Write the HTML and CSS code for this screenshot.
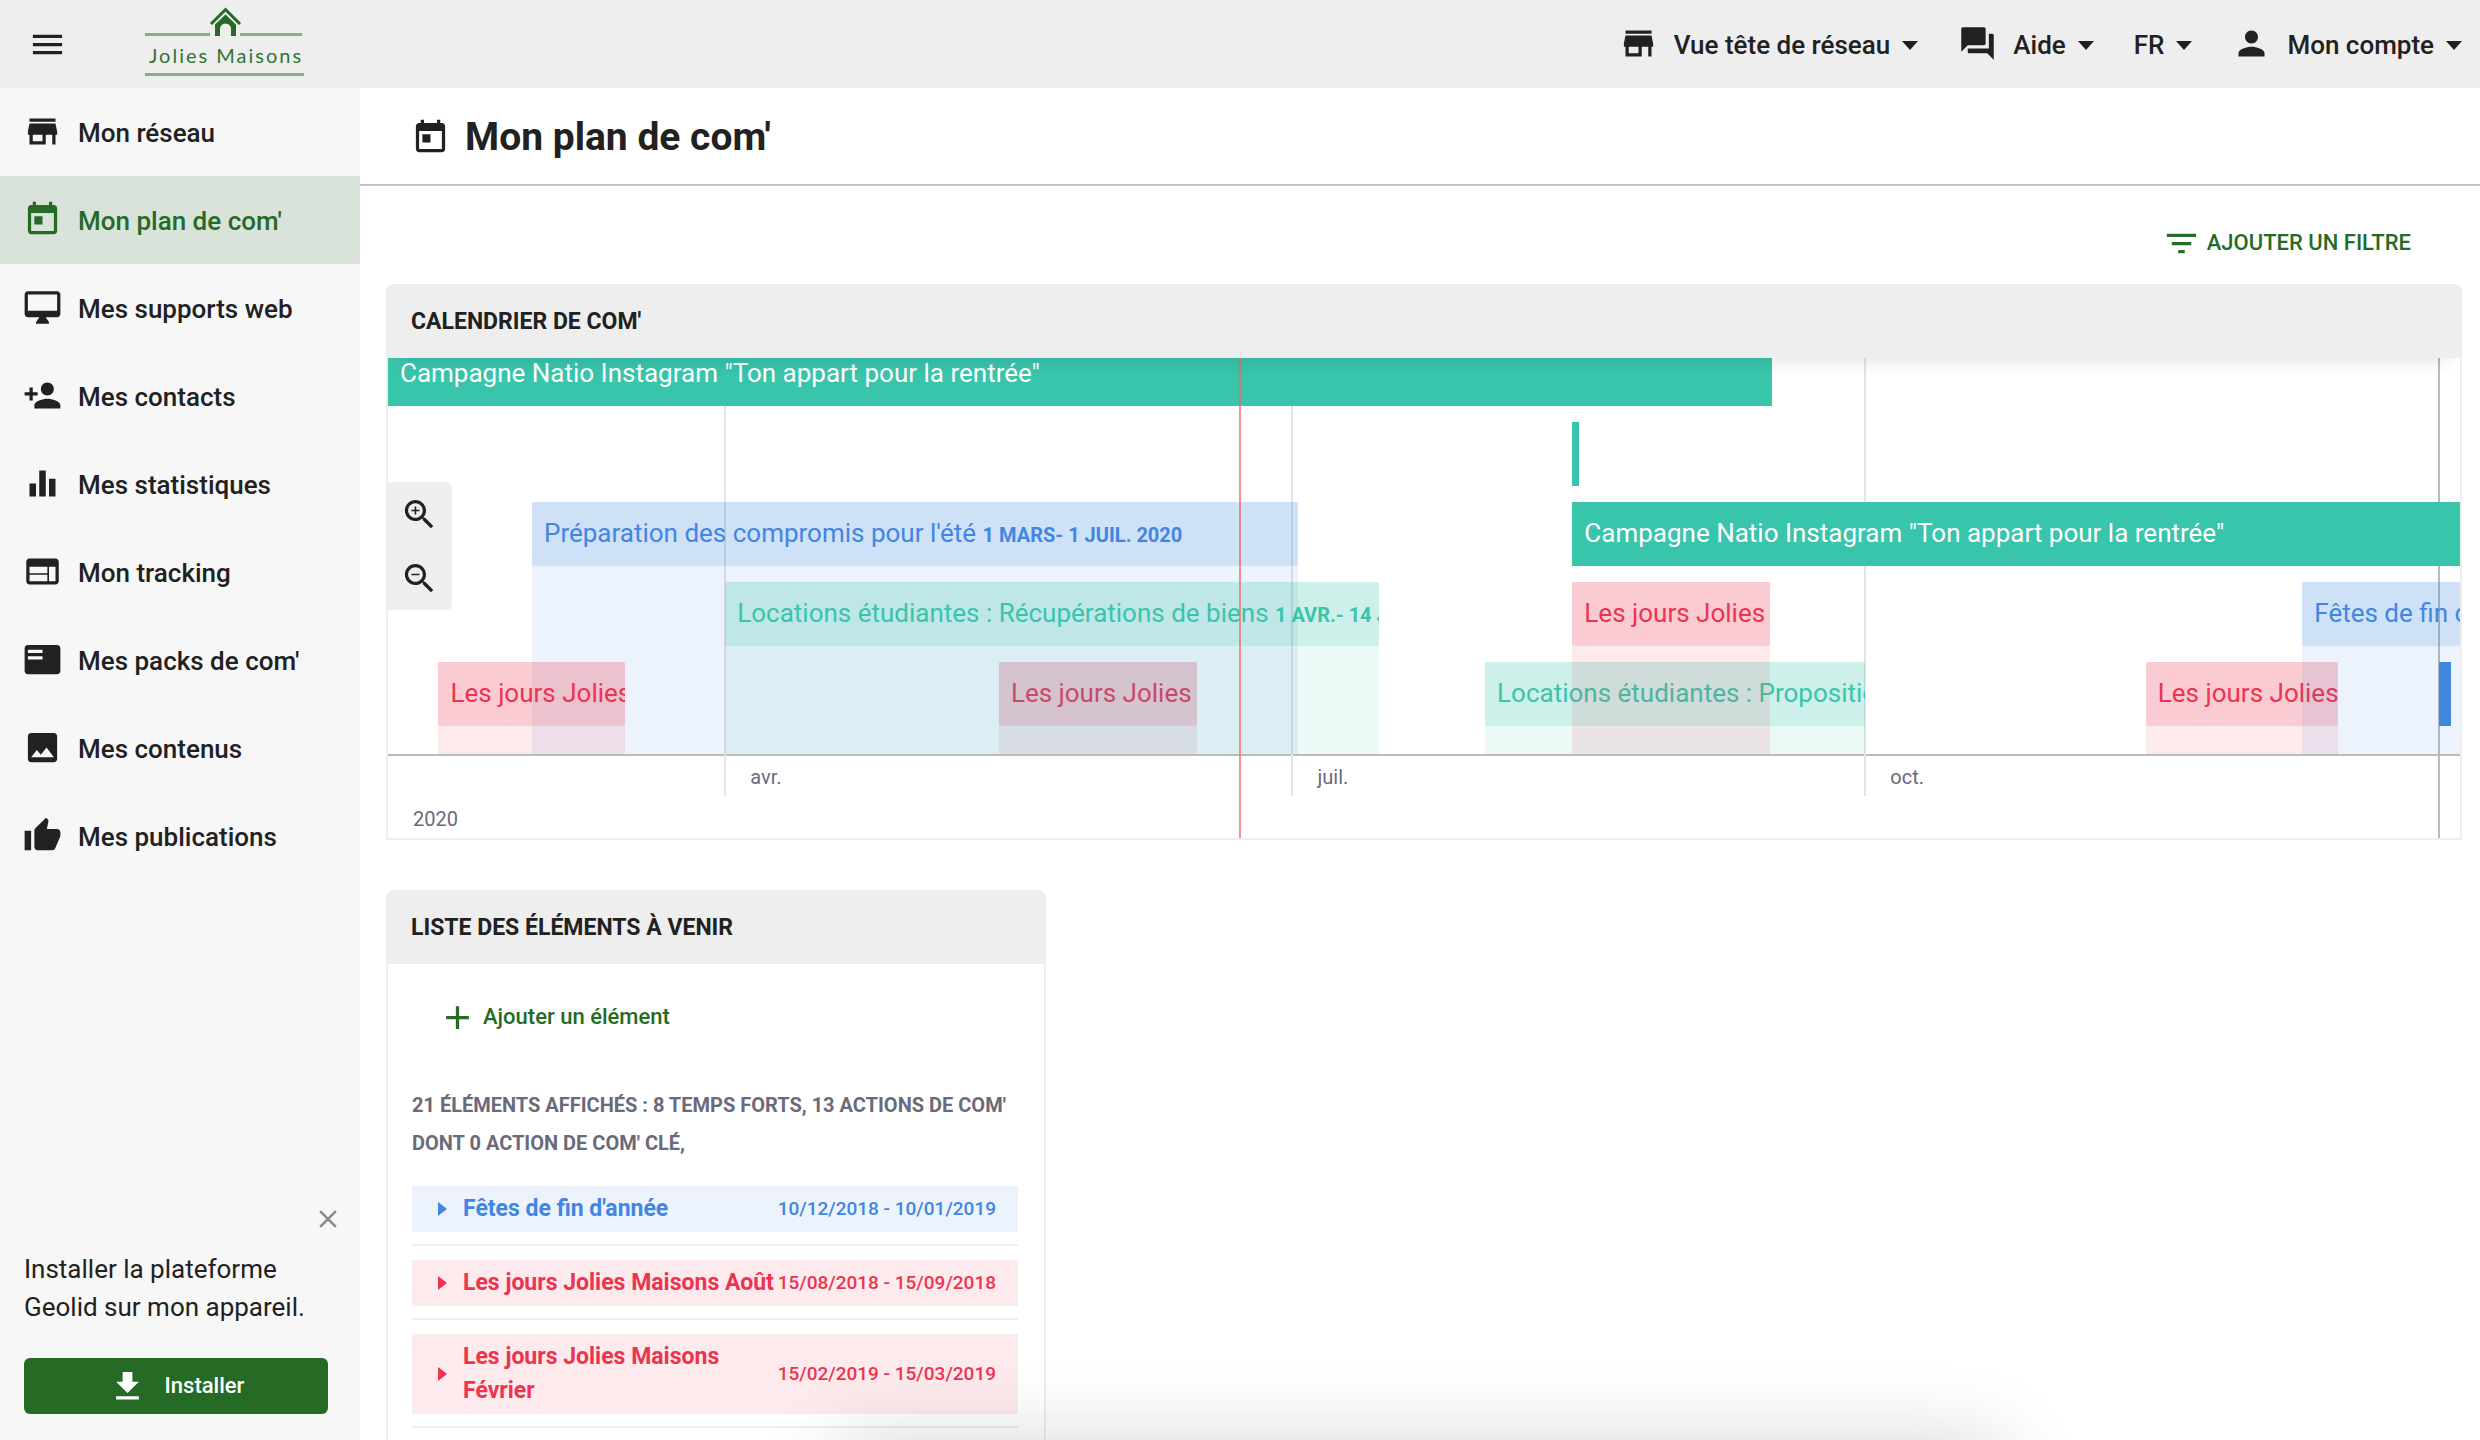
FILE: index.html
```html
<!DOCTYPE html>
<html lang="fr">
<head>
<meta charset="utf-8">
<meta name="viewport" content="width=device-width, initial-scale=1">
<title>Mon plan de com' – Jolies Maisons</title>
<link rel="stylesheet" href="styles.css">
</head>
<body>
<svg class="sprite" aria-hidden="true">
  <symbol id="i-menu" viewBox="0 0 24 24"><path d="M3 18h18v-2H3v2zm0-5h18v-2H3v2zm0-7v2h18V6H3z"/></symbol>
  <symbol id="i-store" viewBox="0 0 24 24"><path d="M20 4H4v2h16V4zm1 10v-2l-1-5H4l-1 5v2h1v6h10v-6h4v6h2v-6h1zm-9 4H6v-4h6v4z"/></symbol>
  <symbol id="i-today" viewBox="0 0 24 24"><path d="M19 3h-1V1h-2v2H8V1H6v2H5c-1.11 0-1.99.9-1.99 2L3 19c0 1.1.89 2 2 2h14c1.1 0 2-.9 2-2V5c0-1.1-.9-2-2-2zm0 16H5V8h14v11zM7 10h5v5H7z"/></symbol>
  <symbol id="i-screen" viewBox="0 0 24 24"><path d="M21 2H3c-1.1 0-2 .9-2 2v12c0 1.1.9 2 2 2h7l-2 3v1h8v-1l-2-3h7c1.1 0 2-.9 2-2V4c0-1.1-.9-2-2-2zm0 12H3V4h18v10z"/></symbol>
  <symbol id="i-person-add" viewBox="0 0 24 24"><path d="M15 12c2.21 0 4-1.79 4-4s-1.79-4-4-4-4 1.79-4 4 1.79 4 4 4zm-9-2V7H4v3H1v2h3v3h2v-3h3v-2H6zm9 4c-2.67 0-8 1.34-8 4v2h16v-2c0-2.66-5.33-4-8-4z"/></symbol>
  <symbol id="i-stats" viewBox="0 0 24 24"><path d="M4 12h4v8H4zM10 4h4v16h-4zM16 9h4v11h-4z"/></symbol>
  <symbol id="i-web" viewBox="0 0 24 24"><path d="M20 4H4c-1.1 0-1.99.9-1.99 2L2 18c0 1.1.9 2 2 2h16c1.1 0 2-.9 2-2V6c0-1.1-.9-2-2-2zm-5 14H4v-4h11v4zm0-5H4V9h11v4zm5 5h-4V9h4v9z"/></symbol>
  <symbol id="i-pack" viewBox="0 0 24 24"><path d="M21 3H3c-1.1 0-2 .9-2 2v14c0 1.1.9 2 2 2h18c1.1 0 2-.9 2-2V5c0-1.1-.9-2-2-2zm-9 9H3v-2h9v2zm0-4H3V6h9v2z"/></symbol>
  <symbol id="i-image" viewBox="0 0 24 24"><path d="M21 19V5c0-1.1-.9-2-2-2H5c-1.1 0-2 .9-2 2v14c0 1.1.9 2 2 2h14c1.1 0 2-.9 2-2zM8.5 13.5l2.5 3.01L14.5 12l4.5 6H5l3.500-4.500z"/></symbol>
  <symbol id="i-thumb" viewBox="0 0 24 24"><path d="M1 21h4V9H1v12zm22-11c0-1.1-.9-2-2-2h-6.310l.95-4.570.03-.32c0-.41-.17-.79-.44-1.060L14.170 1 7.590 7.590C7.220 7.950 7 8.450 7 9v10c0 1.100.9 2 2 2h9c.83 0 1.540-.5 1.840-1.220l3.020-7.050c.09-.23.14-.47.14-.73v-2z"/></symbol>
  <symbol id="i-chat" viewBox="0 0 24 24"><path d="M21 6h-2v9H6v2c0 .55.45 1 1 1h11l4 4V7c0-.55-.45-1-1-1zm-4 6V3c0-.55-.45-1-1-1H3c-.55 0-1 .45-1 1v14l4-4h10c.55 0 1-.45 1-1z"/></symbol>
  <symbol id="i-person" viewBox="0 0 24 24"><path d="M12 12c2.210 0 4-1.790 4-4s-1.790-4-4-4-4 1.790-4 4 1.790 4 4 4zm0 2c-2.670 0-8 1.340-8 4v2h16v-2c0-2.660-5.330-4-8-4z"/></symbol>
  <symbol id="i-filter" viewBox="0 0 24 24"><path d="M10 18h4v-2h-4v2zM3 6v2h18V6H3zm3 7h12v-2H6v2z"/></symbol>
  <symbol id="i-zoom-in" viewBox="0 0 24 24"><path d="M15.500 14h-.79l-.28-.27C15.410 12.590 16 11.110 16 9.500 16 5.910 13.090 3 9.500 3S3 5.910 3 9.500 5.910 16 9.500 16c1.610 0 3.090-.59 4.230-1.570l.27.28v.79l5 4.990L20.490 19l-4.990-5zm-6 0C7.010 14 5 11.990 5 9.500S7.010 5 9.500 5 14 7.010 14 9.500 11.990 14 9.500 14zm2.500-4h-2v2H9v-2H7V9h2V7h1v2h2v1z"/></symbol>
  <symbol id="i-zoom-out" viewBox="0 0 24 24"><path d="M15.500 14h-.79l-.28-.27C15.410 12.590 16 11.110 16 9.500 16 5.910 13.090 3 9.500 3S3 5.910 3 9.500 5.910 16 9.500 16c1.610 0 3.090-.59 4.230-1.570l.27.28v.79l5 4.990L20.490 19l-4.990-5zm-6 0C7.010 14 5 11.990 5 9.500S7.010 5 9.500 5 14 7.010 14 9.500 11.990 14 9.500 14zM7 9h5v1H7z"/></symbol>
  <symbol id="i-plus" viewBox="0 0 24 24"><path d="M19 13h-6v6h-2v-6H5v-2h6V5h2v6h6v2z"/></symbol>
  <symbol id="i-close" viewBox="0 0 24 24"><path d="M19 6.410L17.590 5 12 10.590 6.410 5 5 6.410 10.590 12 5 17.590 6.410 19 12 13.410 17.590 19 19 17.590 13.410 12z"/></symbol>
  <symbol id="i-download" viewBox="0 0 24 24"><path d="M19 9h-4V3H9v6H5l7 7 7-7zM5 18v2h14v-2H5z"/></symbol>
</svg>

<div class="app">
  <header class="topbar">
    <button class="icon-button" type="button" aria-label="Menu"><svg class="icon"><use href="#i-menu"/></svg></button>
    <a class="logo" href="#" aria-label="Jolies Maisons">
      <svg class="logo__art" viewBox="0 0 160 80">
        <g fill="none" stroke="#89ad8a" stroke-width="3"><path d="M0 30.500H65M95 30.500h62M0 70.500h159"/></g>
        <path d="M66 20L80.500 5.500 95 20" fill="none" stroke="#256b26" stroke-width="3"/>
        <path d="M70 32V20.500L80.500 10.500 91 20.500V32H86V25a5.500 5.500 0 0 0-11 0v7z" fill="#256b26"/>
        <text x="4" y="59">Jolies Maisons</text>
      </svg>
    </a>
    <nav class="topnav" aria-label="Compte">
      <button class="topnav__item" type="button"><svg class="icon"><use href="#i-store"/></svg><span>Vue tête de réseau</span></button>
      <button class="topnav__item" type="button"><svg class="icon"><use href="#i-chat"/></svg><span>Aide</span></button>
      <button class="topnav__item" type="button"><span>FR</span></button>
      <button class="topnav__item" type="button"><svg class="icon"><use href="#i-person"/></svg><span>Mon compte</span></button>
    </nav>
  </header>

  <aside class="sidebar">
    <nav class="menu" aria-label="Navigation principale">
      <a class="menu__item" href="#"><svg class="icon"><use href="#i-store"/></svg>Mon réseau</a>
      <a class="menu__item menu__item--active" href="#" aria-current="page"><svg class="icon"><use href="#i-today"/></svg>Mon plan de com'</a>
      <a class="menu__item" href="#"><svg class="icon"><use href="#i-screen"/></svg>Mes supports web</a>
      <a class="menu__item" href="#"><svg class="icon"><use href="#i-person-add"/></svg>Mes contacts</a>
      <a class="menu__item" href="#"><svg class="icon"><use href="#i-stats"/></svg>Mes statistiques</a>
      <a class="menu__item" href="#"><svg class="icon"><use href="#i-web"/></svg>Mon tracking</a>
      <a class="menu__item" href="#"><svg class="icon"><use href="#i-pack"/></svg>Mes packs de com'</a>
      <a class="menu__item" href="#"><svg class="icon"><use href="#i-image"/></svg>Mes contenus</a>
      <a class="menu__item" href="#"><svg class="icon"><use href="#i-thumb"/></svg>Mes publications</a>
    </nav>
    <section class="install">
      <button class="install__close" type="button" aria-label="Fermer"><svg class="icon icon--small"><use href="#i-close"/></svg></button>
      <p class="install__text">Installer la plateforme Geolid sur mon appareil.</p>
      <button class="install__button" type="button"><svg class="icon"><use href="#i-download"/></svg>Installer</button>
    </section>
  </aside>

  <main class="content">
    <header class="page-head">
      <svg class="icon"><use href="#i-today"/></svg>
      <h1 class="page-head__title">Mon plan de com'</h1>
    </header>

    <div class="toolbar">
      <button class="link-button" type="button"><svg class="icon"><use href="#i-filter"/></svg>AJOUTER UN FILTRE</button>
    </div>

    <section class="card">
      <h2 class="card__head card__head--raised">CALENDRIER DE COM'</h2>
      <!-- --at, --from and --to are days since the left edge of the visible range -->
      <div class="timeline">
        <div class="plot">
          <i class="gridline" style="--at: 54.1"></i>
          <i class="gridline" style="--at: 145.1"></i>
          <i class="gridline" style="--at: 237"></i>
          <i class="gridline gridline--year" style="--at: 329.1"></i>

          <div class="event event--red" style="--row: 4; --from: 98; --to: 129.8"><div class="event__bar">Les jours Jolies</div></div>
          <div class="event event--blue" style="--row: 2; --from: 23.1; --to: 146"><div class="event__bar">Préparation des compromis pour l'été <b>1 MARS- 1 JUIL. 2020</b></div></div>
          <div class="event event--green" style="--row: 3; --from: 54.1; --to: 159"><div class="event__bar">Locations étudiantes : Récupérations de biens <b>1 AVR.- 14 JUIL. 2020</b></div></div>
          <div class="event event--red" style="--row: 4; --from: 8.1; --to: 38"><div class="event__bar">Les jours Jolies</div></div>
          <div class="event event--green" style="--row: 4; --from: 176; --to: 237"><div class="event__bar">Locations étudiantes : Propositions</div></div>
          <div class="event event--red" style="--row: 3; --from: 190; --to: 221.7"><div class="event__bar">Les jours Jolies</div></div>
          <div class="event event--red" style="--row: 4; --from: 282; --to: 312.9"><div class="event__bar">Les jours Jolies</div></div>
          <div class="event event--blue" style="--row: 3; --from: 307.1; --to: 332.4"><div class="event__bar">Fêtes de fin d'année</div></div>

          <div class="action" style="--row: 0; --from: 0; --to: 222">Campagne Natio Instagram "Ton appart pour la rentrée"</div>
          <div class="action action--brief" style="--row: 1; --from: 190; --to: 191.1"></div>
          <div class="action" style="--row: 2; --from: 190; --to: 332.4">Campagne Natio Instagram "Ton appart pour la rentrée"</div>
          <div class="action action--brief action--blue" style="--row: 4; --from: 329; --to: 331"></div>
        </div>
        <div class="axis">
          <div class="axis__months">
            <span class="axis__label" style="--at: 54.1">avr.</span>
            <span class="axis__label" style="--at: 145.1">juil.</span>
            <span class="axis__label" style="--at: 237">oct.</span>
          </div>
          <div class="axis__years"><span>2020</span></div>
          <i class="gridline gridline--year" style="--at: 329.1"></i>
        </div>
        <i class="today" style="--at: 136.7"></i>
        <div class="zoom">
          <button class="zoom__button" type="button" aria-label="Zoom avant"><svg class="icon"><use href="#i-zoom-in"/></svg></button>
          <button class="zoom__button" type="button" aria-label="Zoom arrière"><svg class="icon"><use href="#i-zoom-out"/></svg></button>
        </div>
      </div>
    </section>

    <section class="card card--list">
      <h2 class="card__head">LISTE DES ÉLÉMENTS À VENIR</h2>
      <div class="card__body">
        <button class="link-button link-button--add" type="button"><svg class="icon"><use href="#i-plus"/></svg>Ajouter un élément</button>
        <p class="summary">21 ÉLÉMENTS AFFICHÉS : 8 TEMPS FORTS, 13 ACTIONS DE COM'<br>DONT 0 ACTION DE COM' CLÉ,</p>
        <ul class="entries">
          <li class="entry"><button class="entry__row entry__row--blue" type="button"><span class="entry__name">Fêtes de fin d'année</span><span class="entry__dates">10/12/2018 - 10/01/2019</span></button></li>
          <li class="entry"><button class="entry__row entry__row--red" type="button"><span class="entry__name">Les jours Jolies Maisons Août</span><span class="entry__dates">15/08/2018 - 15/09/2018</span></button></li>
          <li class="entry"><button class="entry__row entry__row--red" type="button"><span class="entry__name">Les jours Jolies Maisons Février</span><span class="entry__dates">15/02/2019 - 15/03/2019</span></button></li>
        </ul>
      </div>
    </section>
    <div class="snackbar"></div>
  </main>
</div>
</body>
</html>
```
FILE: styles.css
```css
:root {
  --ink: #212121;
  --muted: #6a6a7b;
  --green: #256b26;
  --panel: #eeeeee;
  --teal: 57, 196, 172;
  --blue: 65, 134, 224;
  --red: 237, 51, 80;
}

* { box-sizing: border-box; }

body {
  margin: 0;
  color: var(--ink);
  background: #fff;
  font: 400 26px/38px Roboto, "Liberation Sans", sans-serif;
}

h1, h2, p, ul { margin: 0; padding: 0; }

button {
  margin: 0;
  padding: 0;
  border: 0;
  background: none;
  color: inherit;
  font: inherit;
  cursor: pointer;
}

a { color: inherit; text-decoration: none; }

.sprite { display: none; }

.icon {
  display: block;
  flex: none;
  width: 39px;
  height: 39px;
  fill: currentColor;
}

.icon--small { width: 30px; height: 30px; }

.app {
  display: grid;
  grid-template: 88px minmax(0, 1fr) / 360px minmax(0, 1fr);
  height: 100vh;
}

/* Top bar */
.topbar {
  grid-column: 1 / -1;
  display: flex;
  align-items: center;
  padding: 0 18px 0 28px;
  background: var(--panel);
}

.logo { margin-left: 78px; }

.logo__art { display: block; width: 160px; height: 80px; }

.logo__art text {
  fill: #2f742f;
  font: 400 20px Lato, sans-serif;
  letter-spacing: 2px;
}

.topnav {
  display: flex;
  gap: 40px;
  margin-left: auto;
  font-weight: 500;
}

.topnav__item {
  display: flex;
  align-items: center;
  gap: 16px;
  padding-top: 2px;
}

.topnav__item .icon,
.menu__item .icon { margin-bottom: 4px; }

.topnav__item::after {
  content: "";
  margin-left: -4px;
  border: 8px solid transparent;
  border-top: 9px solid;
  border-bottom: 0;
}

/* Sidebar */
.sidebar {
  display: flex;
  flex-direction: column;
  justify-content: space-between;
  background: #f7f7f7;
}

.menu__item {
  display: flex;
  align-items: center;
  gap: 16px;
  height: 88px;
  padding: 2px 0 0 23px;
  font-weight: 500;
}

.menu__item--active { color: var(--green); background: #d9e3da; }

.install {
  display: flex;
  flex-direction: column;
  padding: 0 32px 26px 24px;
}

.install__close {
  align-self: flex-end;
  margin-right: -15px;
  color: #8a8a8a;
}

.install__text { margin: 16px 0 32px; }

.install__button {
  display: flex;
  align-items: center;
  justify-content: center;
  gap: 18px;
  height: 56px;
  border-radius: 6px;
  background: var(--green);
  color: #fff;
  font-size: 22px;
  font-weight: 500;
}

/* Page */
.content {
  position: relative;
  overflow: hidden;
}

.page-head {
  display: flex;
  align-items: center;
  gap: 15px;
  height: 98px;
  padding: 2px 0 0 51px;
  border-bottom: 2px solid #bbc0cf;
}

.page-head__title { font-size: 39px; font-weight: 700; line-height: 48px; }

.toolbar {
  display: flex;
  justify-content: flex-end;
  padding: 32px 69px 16px;
}

.link-button {
  display: flex;
  align-items: center;
  gap: 6px;
  height: 50px;
  color: var(--green);
  font-size: 22px;
  font-weight: 500;
}

.link-button--add { margin-left: 26px; }

.card {
  margin: 0 18px 50px 26px;
  border: 2px solid var(--panel);
  border-radius: 8px 8px 0 0;
}

.card--list { width: 660px; }

.card__head {
  position: relative;
  height: 72px;
  padding-left: 23px;
  background: var(--panel);
  font-size: 23px;
  font-weight: 700;
  line-height: 71px;
}

.card__head--raised {
  z-index: 1;
  box-shadow: 0 16px 16px -12px rgba(0, 0, 0, .1);
}

.card__body { padding: 28px 26px 60px 24px; }

/* Timeline */
.timeline {
  --days: 332.4;
  position: relative;
  overflow: hidden;
}

.plot {
  position: relative;
  height: 398px;
  border-bottom: 2px solid #bbb;
}

.gridline,
.today {
  position: absolute;
  top: 0;
  bottom: -42px;
  left: calc(var(--at) / var(--days) * 100%);
  width: 2px;
  margin-left: -1px;
  background: #e4e4e4;
}

.gridline--year { bottom: 0; background: #bbb; }

.today { bottom: 0; background: rgba(245, 100, 95, .7); }

.event,
.action {
  position: absolute;
  top: calc(var(--row) * 80px - 16px);
  left: calc(var(--from) / var(--days) * 100%);
  width: calc((var(--to) - var(--from)) / var(--days) * 100%);
}

.event { bottom: 0; background: rgba(var(--tone), .1); }

.event__bar,
.action {
  height: 64px;
  padding-left: 12px;
  overflow: hidden;
  line-height: 62px;
  white-space: nowrap;
}

.event__bar {
  border-radius: 2px;
  background: rgba(var(--tone), .17);
  color: rgb(var(--tone));
}

.event__bar b { font-size: 20px; font-weight: 700; }

.event--red { --tone: var(--red); }
.event--blue { --tone: var(--blue); }
.event--green { --tone: var(--teal); }

.action { background: rgb(var(--teal)); color: #fff; }
.action--brief { padding: 0; }
.action--blue { background: rgb(var(--blue)); }

.axis {
  position: relative;
  color: var(--muted);
  font-size: 20px;
  line-height: 42px;
}

.axis__months { position: relative; height: 40px; }

.axis__label {
  position: absolute;
  left: calc(var(--at) / var(--days) * 100%);
  padding-left: 25px;
}

.axis__years { height: 42px; padding-left: 25px; line-height: 46px; }

.zoom {
  position: absolute;
  top: 124px;
  left: 0;
  border-radius: 0 6px 6px 0;
  background: var(--panel);
}

.zoom__button {
  display: grid;
  place-items: center;
  width: 64px;
  height: 64px;
  padding-right: 2px;
}

/* Upcoming list */
.summary {
  margin: 44px 0 24px;
  color: var(--muted);
  font-size: 20px;
  font-weight: 700;
}

.entries { list-style: none; }

.entry {
  margin-bottom: 14px;
  padding-bottom: 12px;
  border-bottom: 2px solid var(--panel);
}

.entry__row {
  display: flex;
  align-items: center;
  width: 100%;
  padding: 6px 22px 6px 26px;
  background: rgba(var(--tone), .1);
  color: rgb(var(--tone));
  font-weight: 700;
  text-align: left;
}

.entry__row--blue { --tone: var(--blue); }
.entry__row--red { --tone: var(--red); }

.entry__row::before {
  content: "";
  margin-right: 16px;
  border: 7px solid transparent;
  border-left: 9px solid;
  border-right: 0;
}

.entry__name { flex: 1; font-size: 23px; line-height: 34px; }

.entry__dates { font-size: 19px; font-weight: 500; line-height: 34px; white-space: nowrap; }

/* Waits below the fold; only its shadow shows */
.snackbar {
  position: absolute;
  top: 100%;
  left: 50%;
  width: 55%;
  height: 96px;
  transform: translateX(-50%);
  background: #fff;
  box-shadow: 0 0 80px rgba(0, 0, 0, .16);
}
```
